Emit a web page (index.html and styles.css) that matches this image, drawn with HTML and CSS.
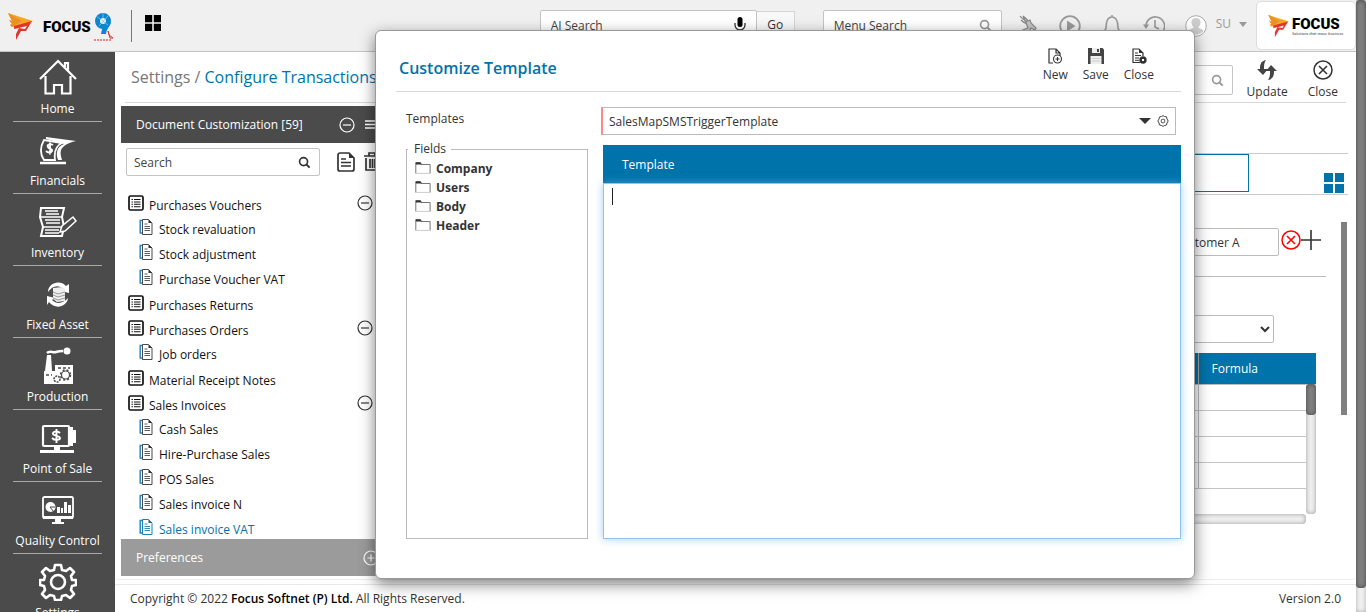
FILE: index.html
```html
<!DOCTYPE html>
<html lang="en">
<head>
<meta charset="utf-8">
<title>Focus 9 - Configure Transactions</title>
<link rel="stylesheet" href="styles.css">
</head>
<body>
<svg class="defs" aria-hidden="true">
  <symbol id="i-group" viewBox="0 0 16 16"><rect x="1" y="1" width="14" height="14" rx="1.5" fill="none" stroke="currentColor" stroke-width="1.7"/><path d="M3.5 4.5h1.4M3.5 7h1.4M3.5 9.300h1.400M3.500 11.700h1.400M6 4.500h6.500M6 7h6.500M6 9.300h6.500M6 11.700h6.500" stroke="currentColor" stroke-width="1.1"/></symbol>
  <symbol id="i-doc" viewBox="0 0 14 16"><path d="M3.500 1.500H1.200v12.500h2.300" fill="none" stroke="#2a86c8" stroke-width="1.500"/><path d="M3.500.5h6L13 4v11.500H3.500z" fill="#fff" stroke="currentColor" stroke-width=".9"/><path d="M9.500.5V4H13z" fill="currentColor"/><path d="M5.500 5h3M5.500 7.500h5.500M5.500 9.500h5.500M5.500 11.500h5.500" stroke="currentColor" stroke-width=".8"/></symbol>
  <symbol id="i-minus" viewBox="0 0 16 16"><circle cx="8" cy="8" r="7" fill="none" stroke="currentColor" stroke-width="1.200"/><path d="M4 8h8" stroke="currentColor" stroke-width="1.200"/></symbol>
  <symbol id="i-plus" viewBox="0 0 16 16"><circle cx="8" cy="8" r="7" fill="none" stroke="currentColor" stroke-width="1.200"/><path d="M4.500 8h7M8 4.500v7" stroke="currentColor" stroke-width="1.200"/></symbol>
  <symbol id="i-search" viewBox="0 0 14 14"><circle cx="6" cy="6" r="4.300" fill="none" stroke="currentColor" stroke-width="1.800"/><path d="M9 9l3.500 3.500" stroke="currentColor" stroke-width="2.200"/></symbol>
  <symbol id="i-grid" viewBox="0 0 20 20"><path d="M0 0h9v9H0zM11 0h9v9h-9zM0 11h9v9H0zM11 11h9v9h-9z" fill="currentColor"/></symbol>
  <symbol id="i-folder" viewBox="0 0 16 12"><path d="M.8 11V1h4.500l1 1.500h8.800v9" fill="none" stroke="#666" stroke-width=".9"/><path d="M0 11.400h15" stroke="#ccc"/><path d="M.5.3H5.500l1.500 2.200H1z" fill="#333"/></symbol>
  <symbol id="i-close" viewBox="0 0 20 20"><circle cx="10" cy="10" r="9" fill="none" stroke="currentColor" stroke-width="1.500"/><path d="M6 6l8 8M14 6l-8 8" stroke="currentColor" stroke-width="1.600"/></symbol>
  <symbol id="i-bird" viewBox="0 0 26 29"><path d="M0 1l25 8-8 3-13 3-2-2 2-1-3-4 3 1z" fill="#f7a823"/><path d="M0 1l14 8-10 6-2-2 2-1-3-4 3 1z" fill="#e9902a"/><path d="M6 14l18-5-6 10h-5l-5 9v-6l3-6-5 1z" fill="#e2352b"/><path d="M11 16l8-2-2 3z" fill="#fff"/></symbol>
</svg>

<div class="app">
  <div class="frame">
    <header class="topbar">
      <div class="brand">
        <svg class="bird"><use href="#i-bird"/></svg>
        <span class="brand-name">FOCUS</span>
        <svg class="nine" viewBox="0 0 20 30"><circle cx="9" cy="9" r="5.500" fill="none" stroke="#0c86cf" stroke-width="5"/><path d="M14.500 10c-1 4-5 6-5 12" fill="none" stroke="#0c86cf" stroke-width="5"/><path d="M2 4l12 9M15 3L5 14M9 1v5" stroke="#7cc8ee" stroke-width=".8"/><path d="M14 19l1 4 4 3h-3z" fill="none" stroke="#d33"/><path d="M0 28h18" stroke="#d66" stroke-width="1.500" stroke-dasharray="2 1"/></svg>
      </div>
      <span class="divider"></span>
      <button class="plain" aria-label="Apps"><svg class="apps"><use href="#i-grid"/></svg></button>
      <div class="top-right">
        <div class="field ai"><input type="text" placeholder="AI Search" aria-label="AI Search">
          <svg class="mic" viewBox="0 0 12 18"><rect x="3.500" y="0" width="5" height="10" rx="2.500" fill="#000"/><path d="M1 6v2a5 5 0 0 0 10 0V6M6 13v4M3 17h6" fill="none" stroke="#333" stroke-width="1.300"/></svg></div>
        <button class="go">Go</button>
        <div class="field menu"><input type="text" placeholder="Menu Search" aria-label="Menu Search"><svg class="mag"><use href="#i-search"/></svg></div>
        <div class="tools">
          <svg viewBox="0 0 22 22" fill="none" stroke="#888" stroke-width="1.200"><path d="M3 1c2 3 5 4 7 6M4 5c2 2 3 3 6 4M6 1c2 2 4 3 5 5l2-1 1 3 5 5-1 2-4-2-1 2 5 2c-4 1-6 0-8-1l-4 2-4 3 2-5 4-2 3-1z" fill="#c4c4c4"/></svg>
          <svg viewBox="0 0 22 22"><circle cx="11" cy="11" r="9.800" fill="none" stroke="#999" stroke-width="1.800"/><path d="M8 5.500l8.500 5.500L8 16.500z" fill="#999"/></svg>
          <svg viewBox="0 0 22 22"><path d="M11 0v2M5 13c0-7 2-11 6-11s6 4 6 11c0 2 3 3 3 4H2c0-1 3-2 3-4zM9 19h4" fill="none" stroke="#999" stroke-width="1.600"/></svg>
          <svg viewBox="0 0 22 22"><path d="M3 11a9.300 9.300 0 1 1 3 7M12 5v7l4 2" fill="none" stroke="#999" stroke-width="1.600"/><path d="M0 9.500h6L3 14z" fill="#999"/></svg>
          <svg viewBox="0 0 22 22"><circle cx="11" cy="11" r="10.300" fill="#fff" stroke="#aaa"/><path d="M11 3c3 0 5 2 4.500 5-.3 2-1 3-2 4 0 2 5 2 5 4a10 10 0 0 1-15 0c0-2 5-2 5-4-1-1-1.700-2-2-4C6 5 8 3 11 3z" fill="#ccc"/></svg>
        </div>
        <button class="plain user">SU<span class="caret"></span></button>
        <div class="card"><svg class="bird"><use href="#i-bird"/></svg><div class="card-text"><span class="brand-name">FOCUS</span><span class="tag">Solutions that move business</span></div></div>
      </div>
    </header>

    <div class="middle">
      <nav class="sidebar">
        <a href="#"><svg viewBox="0 0 38 38" fill="none" stroke="#fff" stroke-width="2.200"><path d="M1 20L19 2l18 18M26 8V4h3v8M6.500 17v17.500H15V26h8v8.500h8.500V17"/></svg><span>Home</span></a>
        <a href="#"><svg viewBox="0 0 38 38"><path d="M1 32h26" stroke="#fff" stroke-width="2.500"/><path d="M5 9C1 16 1 23 5 29h11c-1-8 0-14 7-17z" fill="none" stroke="#fff" stroke-width="1.800"/><path d="M7 6l30 4c-9 2-13 5-15 9-1 3 0 7 1 10h-4c-3-8 0-14 6-16L7 8z" fill="#fff"/><path d="M14 14c-4-2-6 0-5 2s5 2 4 4-4 2-6 0M11 11.500v12" fill="none" stroke="#fff" stroke-width="1.900"/></svg><span>Financials</span></a>
        <a href="#"><svg viewBox="0 0 38 38"><path d="M2 5h23l-2 9 2 10-2 9H2l2-9-3-10z" fill="none" stroke="#fff" stroke-width="2"/><path d="M1 14h22M3 24h21M6 8h13M7 11h13M6 17h15M7 20h14M6 27h14M6 30h14" stroke="#fff" stroke-width="1.500"/><path d="M21 29l2-6 11-9 3 4-11 10z" fill="#4b4b4b" stroke="#fff" stroke-width="1.500"/></svg><span>Inventory</span></a>
        <a href="#"><svg viewBox="0 0 38 38"><path d="M9 17c0-9 12-13 18-6l3-2v9l-8-2 3-2c-6-5-12-3-16 3zM29 23c-1 9-13 12-19 4l-2 3v-9l8 2-3 2c5 5 12 3 16-2z" fill="#fff"/><path d="M14 13l9-1 3 2v12l-8 1-4-3z" fill="#eee"/><path d="M14 17l5 2 7-2M14 20l5 2 7-2M14 23l5 2 7-2" fill="none" stroke="#777" stroke-width=".7"/></svg><span>Fixed Asset</span></a>
        <a href="#"><svg viewBox="0 0 38 38"><path d="M5 37V24h1L8 8h4l1 16h3v-6h18v19z" fill="#fff"/><path d="M8 6c3-3 6 0 9-1s4-1 7-1" fill="none" stroke="#fff" stroke-width="2.500"/><circle cx="28" cy="4" r="3.500" fill="#fff"/><g fill="none" stroke="#4b4b4b"><circle cx="26.500" cy="28" r="4" stroke-width="1.200"/><circle cx="26.500" cy="28" r="5" stroke-width="1.500" stroke-dasharray="2 2"/><circle cx="18" cy="32" r="3" stroke-width="1.500" stroke-dasharray="2 1"/><path d="M7 28h6M19 21h12" stroke-dasharray="3 2" stroke-width="1.300"/></g></svg><span>Production</span></a>
        <a href="#"><svg viewBox="0 0 38 38"><rect x="4" y="7" width="26" height="20" rx="1" fill="none" stroke="#fff" stroke-width="2.200"/><path d="M31 8h3v3h3v13h-3v3h-3zM15 28h6v3h14v3H1v-3h14z" fill="#fff"/><path d="M21 14c-3-3-8-1-7 1s7 2 7 4-5 3-8 0M17.500 10v14" fill="none" stroke="#fff" stroke-width="1.900"/></svg><span>Point of Sale</span></a>
        <a href="#"><svg viewBox="0 0 38 38"><rect x="4" y="6" width="30" height="21" rx="1.500" fill="none" stroke="#fff" stroke-width="1.800"/><path d="M4 25h30v3H4zM16 28h6v3h3v2H13v-2h3z" fill="#fff"/><circle cx="11.500" cy="16" r="5" fill="#fff"/><path d="M11 16h5M11 16l4 5" stroke="#4b4b4b"/><path d="M18 22v-6h3v6zM22 22v-5h2v5zM25 22V11h3v11zM29 22v-8h3v8z" fill="#fff"/></svg><span>Quality Control</span></a>
        <a href="#"><svg viewBox="0 0 38 38" fill="none" stroke="#fff" stroke-width="2.600"><circle cx="19" cy="19" r="7"/><path d="M16 2h6l1 5 4 1 4-3 4 4-3 4 1 4 4 0v5l-4 1-1 4 3 4-4 4-4-3-4 1-1 4h-6l-1-4-4-1-4 3-4-4 3-4-1-4-4-1v-5l4 0 1-4-3-4 4-4 4 3 4-1z" stroke-linejoin="round"/></svg><span>Settings</span></a>
      </nav>

      <div class="content">
        <main class="page">
          <div class="title-row">
            <h1><span>Settings /</span> <b>Configure Transactions</b></h1>
            <div class="title-tools">
              <div class="field page-search"><input type="text" aria-label="Search page"><svg class="mag"><use href="#i-search"/></svg></div>
              <button class="tool"><svg viewBox="0 0 20 20"><path d="M9 0C4 1 3 4 3 9H0l6 6 5-6H7c0-4 0-6 2-9zM11 20c5-1 6-4 6-9h3l-6-6-5 6h4c0 4 0 6-2 9z" fill="#444"/></svg>Update</button>
              <button class="tool"><svg><use href="#i-close"/></svg>Close</button>
            </div>
          </div>

          <div class="columns">
            <section class="docs">
              <div class="docs-head"><span>Document Customization [59]</span><span class="head-icons"><svg class="circ"><use href="#i-minus"/></svg><svg class="bars" viewBox="0 0 14 12"><path d="M0 2h14M0 5.500h14M0 9h14" stroke="#fff" stroke-width="1.600"/></svg></span></div>
              <div class="docs-search">
                <div class="field"><input type="text" placeholder="Search" aria-label="Search documents"><svg class="mag dark"><use href="#i-search"/></svg></div>
                <svg class="act" viewBox="0 0 18 20"><path d="M3 1h9l5 5v11a2 2 0 0 1-2 2H3a2 2 0 0 1-2-2V3a2 2 0 0 1 2-2z" fill="none" stroke="#333" stroke-width="1.700"/><path d="M12 1l5 5h-5z" fill="#333"/><path d="M4 7h5M4 10.500h10M4 14h10" stroke="#333" stroke-width="1.500"/></svg>
                <svg class="act" viewBox="0 0 18 20"><path d="M1 4h16M6 4V1h6v3M3 6v12h12V6M7 7v9M9.500 7v9M12 7v9" fill="none" stroke="#333" stroke-width="1.700"/></svg>
              </div>
              <ul class="tree">
                <li><div class="group"><svg><use href="#i-group"/></svg><span>Purchases Vouchers</span><svg class="fold"><use href="#i-minus"/></svg></div>
                  <ul><li><svg><use href="#i-doc"/></svg><span>Stock revaluation</span></li><li><svg><use href="#i-doc"/></svg><span>Stock adjustment</span></li><li><svg><use href="#i-doc"/></svg><span>Purchase Voucher VAT</span></li></ul></li>
                <li><div class="group"><svg><use href="#i-group"/></svg><span>Purchases Returns</span></div></li>
                <li><div class="group"><svg><use href="#i-group"/></svg><span>Purchases Orders</span><svg class="fold"><use href="#i-minus"/></svg></div>
                  <ul><li><svg><use href="#i-doc"/></svg><span>Job orders</span></li></ul></li>
                <li><div class="group"><svg><use href="#i-group"/></svg><span>Material Receipt Notes</span></div></li>
                <li><div class="group"><svg><use href="#i-group"/></svg><span>Sales Invoices</span><svg class="fold"><use href="#i-minus"/></svg></div>
                  <ul><li><svg><use href="#i-doc"/></svg><span>Cash Sales</span></li><li><svg><use href="#i-doc"/></svg><span>Hire-Purchase Sales</span></li><li><svg><use href="#i-doc"/></svg><span>POS Sales</span></li><li><svg><use href="#i-doc"/></svg><span>Sales invoice N</span></li><li class="active"><svg><use href="#i-doc"/></svg><span>Sales invoice VAT</span></li></ul></li>
              </ul>
              <div class="prefs"><span>Preferences</span><svg class="circ"><use href="#i-plus"/></svg></div>
            </section>

            <section class="detail">
              <div class="tabs"><span class="tab"></span><svg class="tiles"><use href="#i-grid"/></svg></div>
              <div class="detail-body">
                <div class="detail-main">
                  <div class="customer"><input type="text" class="box" value="Customer A" aria-label="Customer"><svg class="clear"><use href="#i-close"/></svg><svg class="add" viewBox="0 0 20 20"><path d="M0 10h20M10 0v20" stroke="#333" stroke-width="1.600"/></svg></div>
                  <select class="box pick" aria-label="Type"><option></option></select>
                  <div class="grid-wrap">
                    <table><thead><tr><th></th><th>Formula</th></tr></thead>
                      <tbody><tr><td></td><td></td></tr><tr><td></td><td></td></tr><tr><td></td><td></td></tr><tr><td></td><td></td></tr><tr><td></td><td></td></tr></tbody></table>
                    <div class="vbar"><span></span></div>
                    <div class="hbar"></div>
                  </div>
                </div>
                <div class="side-bar"></div>
              </div>
            </section>
          </div>
        </main>
        <footer><span><b>Copyright © 2022 <strong>Focus Softnet (P) Ltd.</strong></b> All Rights Reserved.</span><span><b>Version</b> 2.0</span></footer>
      </div>
    </div>
  </div>
  <div class="page-bar"><span></span></div>
</div>

<div class="modal" role="dialog" aria-labelledby="dlg-title">
  <div class="modal-head">
    <h2 id="dlg-title">Customize Template</h2>
    <div class="modal-tools">
      <button class="tool"><svg viewBox="0 0 16 16"><path d="M6 15H2V1h7l4 4v3M9 1v4h4" fill="none" stroke="#333" stroke-width="1.200"/><circle cx="10.500" cy="11" r="4" fill="#fff" stroke="#333" stroke-width="1.100"/><path d="M8.500 11h4M10.500 9v4" stroke="#333" stroke-width="1.100"/></svg>New</button>
      <button class="tool"><svg viewBox="0 0 16 16"><path d="M0 0h14.500L16 1.500V16H0z" fill="#444"/><path d="M4 0h8v5H4zM2.500 8h11v8h-11z" fill="#eee"/><path d="M9 1h2v3H9z" fill="#444"/><path d="M4 10.500h8M4 13h8" stroke="#ccc"/></svg>Save</button>
      <button class="tool"><svg viewBox="0 0 16 16"><path d="M9 14.500H2V1h6l4 4v3" fill="none" stroke="#333" stroke-width="1.200"/><path d="M8 1v4h4z" fill="#333"/><path d="M4 5h3M4 7.500h6M4 10h4M4 12.300h4" stroke="#333"/><circle cx="12" cy="12" r="3.700" fill="#333"/><path d="M11 11l2 2M13 11l-2 2" stroke="#fff"/></svg>Close</button>
    </div>
  </div>
  <div class="modal-body">
    <div class="modal-left">
      <label for="tpl">Templates</label>
      <fieldset><legend>Fields</legend>
        <ul><li><svg><use href="#i-folder"/></svg>Company</li><li><svg><use href="#i-folder"/></svg>Users</li><li><svg><use href="#i-folder"/></svg>Body</li><li><svg><use href="#i-folder"/></svg>Header</li></ul>
      </fieldset>
    </div>
    <div class="modal-right">
      <div class="combo"><input id="tpl" type="text" value="SalesMapSMSTriggerTemplate"><span class="caret"></span>
        <svg viewBox="0 0 12 12" fill="none" stroke="#444"><path d="M4.500 1.500L6 .6l1.500.9 2 .3.500 2.200 1.200 2-1.200 2-.5 2-2 .5-1.500.9-1.500-.9-2-.5-.5-2L.8 6 2 4l.5-2z"/><rect x="4.300" y="4.300" width="3.400" height="3.400" rx="1"/></svg></div>
      <div class="editor">
        <label for="body">Template</label>
        <textarea id="body"></textarea>
        <span class="cursor"></span>
      </div>
    </div>
  </div>
</div>
</body>
</html>
```
FILE: styles.css
```css
* { box-sizing: border-box; }
body { margin: 0; font-family: "Open Sans", "Noto Sans", sans-serif; font-size: 12px; line-height: 16px; color: #333; background: #fff; overflow: hidden; }
svg { display: block; flex: none; }
ul { list-style: none; margin: 0; padding: 0; }
button, input, textarea, select { font: inherit; color: inherit; }
a { color: inherit; text-decoration: none; }
.defs { position: absolute; width: 0; height: 0; }
.plain { background: none; border: 0; padding: 0; }

.app { display: flex; height: 100vh; }
.frame { flex: 1; min-width: 0; display: flex; flex-direction: column; }
.page-bar { width: 10px; background: #f0f0f0; box-shadow: inset 0 0 4px #aaa; }
.page-bar span { display: block; height: 96%; background: #838383; border-radius: 4px; box-shadow: inset 0 0 5px #444; }

/* top bar */
.topbar { display: flex; align-items: center; height: 52px; flex: none; background: #f0f0f0; border-bottom: 1px solid #c4c4c4; padding-left: 8px; }
.brand { display: flex; align-items: center; width: 123px; padding-top: 2px; }
.bird { width: 26px; height: 29px; }
.brand-name { font-family: Roboto, sans-serif; font-weight: 900; font-size: 15px; color: #000; }
.brand .brand-name { margin-left: 9px; }
.nine { width: 20px; height: 30px; margin-left: 3px; }
.divider { width: 1px; height: 32px; background: #777; }
.apps { width: 16px; height: 16px; color: #000; margin: 0 0 6px 13px; }
.top-right { margin-left: auto; display: flex; align-items: center; }
.field { display: flex; align-items: center; background: #fff; border: 1px solid #c4c4c4; border-radius: 2px; height: 28px; flex: none; }
.field input { flex: 1; min-width: 0; border: 0; background: none; padding: 2px 0 0 7px; outline: 0; }
.field input::placeholder { color: #444; opacity: 1; }
.top-right .field { height: 31px; }
.top-right .field input { padding: 0 0 0 10px; }
.ai { width: 217px; padding-right: 10px; }
.mic { width: 12px; height: 18px; }
.go { width: 38px; height: 30px; border: 1px solid #d4d4d4; border-left: 0; background: #f8f8f8; padding: 0 0 2px; }
.menu { width: 179px; margin: 0 15px 0 28px; padding-right: 9px; }
.mag { width: 13px; height: 13px; color: #999; }
.mag.dark { color: #333; }
.tools { display: flex; gap: 20px; }
.tools svg { width: 22px; height: 22px; }
.user { display: flex; align-items: center; gap: 8px; margin: 0 9px; padding-bottom: 3px; color: #999; }
.caret { border: 4px solid transparent; border-top: 5px solid #999; border-bottom: 0; }
.card { display: flex; align-items: center; width: 100px; height: 49px; background: #fff; border: 1px solid #ddd; border-radius: 5px; padding-left: 11px; }
.card .bird { width: 22px; height: 24px; }
.card-text { display: flex; flex-direction: column; margin-left: 2px; }
.tag { font-size: 4px; line-height: 4px; font-style: italic; }

/* sidebar */
.middle { flex: 1; min-height: 0; display: flex; }
.sidebar { width: 115px; flex: none; background: #4b4b4b; color: #fff; padding: 0 13px; overflow: hidden; }
.sidebar a { display: flex; flex-direction: column; align-items: center; height: 72px; padding-top: 9px; gap: 4px; border-bottom: 1px solid #aaa; white-space: nowrap; }
.sidebar a:first-child { height: 70px; padding-top: 7px; }
.sidebar svg { width: 38px; height: 38px; }

/* page */
.content { flex: 1; min-width: 0; display: flex; flex-direction: column; }
.page { flex: 1; min-height: 0; display: flex; flex-direction: column; border-bottom: 1px solid #eee; border-radius: 4px; padding-bottom: 3px; }
.title-row { display: flex; justify-content: space-between; align-items: center; height: 51px; margin: 0 10px; padding: 0 8px 0 6px; border-bottom: 1px solid #d8d8d8; }
h1 { margin: 0; font-size: 16px; font-weight: 400; color: #777; }
h1 b { font-weight: 500; color: #0073aa; }
.title-tools { display: flex; align-items: center; }
.page-search { width: 200px; height: 30px; margin: 6px 14px 0 0; padding-right: 8px; }
.tool { display: flex; flex-direction: column; align-items: center; background: none; border: 0; padding: 0; }
.title-tools .tool { gap: 4px; margin-left: 20px; padding-top: 5px; }
.title-tools .page-search + .tool { margin-left: 0; }
.title-tools .tool svg { width: 20px; height: 20px; }
.columns { flex: 1; min-height: 0; display: flex; gap: 20px; padding: 3px 8px 0 6px; }

/* document list */
.docs { width: 270px; flex: none; display: flex; flex-direction: column; min-height: 0; }
.docs-head, .prefs { display: flex; justify-content: space-between; align-items: center; height: 37px; flex: none; padding: 0 12px 0 15px; color: #fff; background: #4b4b4b; }
.prefs { background: #9b9b9b; }
.head-icons { display: flex; align-items: center; gap: 10px; }
.circ { width: 16px; height: 16px; }
.bars { width: 14px; height: 12px; }
.docs-search { display: flex; align-items: center; padding: 5px 5px 0; margin-bottom: 18px; flex: none; }
.docs-search .field { width: 194px; padding-right: 8px; margin-right: 17px; }
.act { width: 18px; height: 20px; }
.act + .act { margin-left: 8px; }
.tree { flex: 1; min-height: 0; overflow: hidden; padding: 0 18px 0 7px; color: #111; }
.tree > li { padding-bottom: 2px; }
.group { display: flex; align-items: center; height: 23px; gap: 5px; }
.group svg { width: 16px; height: 16px; margin-bottom: 5px; }
.group .fold { margin-left: auto; color: #333; }
.tree ul { padding-left: 11px; }
.tree ul li { display: flex; align-items: center; height: 25px; gap: 6px; }
.tree ul svg { width: 14px; height: 16px; margin-bottom: 5px; color: #333; }
.tree .active, .tree ul .active svg { color: #0073aa; }

/* detail */
.detail { flex: 1; min-width: 0; }
.tabs { display: flex; align-items: flex-end; justify-content: space-between; height: 42px; margin-top: 47px; padding: 0 4px 1px 0; border-top: 1px solid #ccc; border-bottom: 1px solid #ccc; }
.tab { align-self: flex-start; width: 838px; height: 38px; border: 1px solid #0073aa; }
.tiles { width: 20px; height: 20px; color: #0073aa; }
.detail-body { display: flex; align-items: flex-start; gap: 15px; padding: 27px 1px 0 0; }
.detail-main { flex: 1; min-width: 0; display: flex; flex-direction: column; align-items: flex-end; }
.side-bar { width: 6px; height: 193px; background: #808080; }
.box { width: 100px; height: 28px; border: 1px solid #bbb; border-radius: 2px; background: #fff; padding: 0 7px; }
.customer { display: flex; align-self: stretch; justify-content: flex-end; padding: 6px 5px 20px 0; border-bottom: 1px solid #bbb; }
.customer .box { width: 110px; padding-left: 4px; }
.clear { width: 20px; height: 20px; color: #f00; margin: 2px 0 0 2px; }
.add { width: 20px; height: 20px; margin-top: 2px; }
.pick { margin: 38px 52px 10px 0; }
.grid-wrap { position: relative; width: 100%; padding: 0 10px 10px 0; }
table { width: 100%; border-collapse: collapse; }
th { height: 31px; background: #0073aa; color: #fff; text-align: left; font-weight: 400; padding: 1px 13px 0; border-right: 1px solid #aaa; border-bottom: 1px solid #bbb; }
th:last-child { width: 118px; border-right: 0; }
td { height: 26px; padding: 0; border-right: 1px solid #bbb; border-bottom: 1px solid #c4c4c4; }
td:last-child, tr:last-child td { border-right: 0; }
tr:last-child td { border-bottom: 0; }
.vbar { position: absolute; right: 10px; top: 31px; bottom: 10px; width: 10px; background: #eee; border-radius: 4px; box-shadow: inset 0 0 4px #999; }
.vbar span { display: block; height: 31px; background: #808080; border-radius: 4px; box-shadow: inset 0 0 4px #444; }
.hbar { position: absolute; left: 0; right: 20px; bottom: 0; height: 10px; background: #eee; border-radius: 4px; box-shadow: inset 0 0 4px #999; }

footer { display: flex; justify-content: space-between; align-items: center; height: 28px; flex: none; margin-top: 4px; padding: 0 15px; border-top: 1px solid #e8e8e8; }
footer b { font-weight: 500; }
footer strong { font-weight: 600; color: #000; }

/* dialog */
.modal { position: absolute; top: 30px; left: 375px; right: 171px; background: #fff; border: 1px solid #999; border-radius: 6px; box-shadow: 0 5px 15px rgba(0, 0, 0, .5); padding: 0 13px 39px 20px; }
.modal-head { display: flex; justify-content: space-between; align-items: center; height: 61px; padding: 13px 27px 0 3px; border-bottom: 1px solid #d8d8d8; }
h2 { margin: 0; font-size: 16px; font-weight: 600; color: #0073aa; }
.modal-tools { display: flex; gap: 15px; padding-bottom: 4px; }
.modal-tools .tool svg { width: 16px; height: 16px; margin-bottom: 3px; }
.modal-body { display: flex; gap: 13px; padding-top: 15px; }
.modal-left { width: 192px; flex: none; padding: 4px 0 0 10px; display: flex; flex-direction: column; }
fieldset { flex: 1; margin: 14px 0 0; padding: 2px 8px 0; border: 1px solid #bbb; }
legend { padding: 0 5px 0 6px; margin-left: -7px; }
fieldset li { display: flex; align-items: center; gap: 5px; height: 19px; font-weight: 700; }
fieldset svg { width: 16px; height: 12px; margin-bottom: 2px; }
.modal-right { flex: 1; min-width: 0; }
.combo { display: flex; align-items: center; height: 28px; margin-right: 5px; border: 1px solid #bbb; border-left: 2px solid #f88; padding-right: 6px; }
.combo input { flex: 1; min-width: 0; border: 0; outline: 0; padding: 2px 0 0 6px; }
.combo .caret { border-width: 6px 6px 0; border-top-color: #333; margin-right: 6px; }
.combo svg { width: 12px; height: 12px; }
.editor { position: relative; display: flex; flex-direction: column; margin: 10px 0 0 2px; }
.editor label { height: 38px; line-height: 40px; padding-left: 19px; background: #0073aa; color: #fff; font-weight: 500; }
.editor textarea { height: 356px; border: 1px solid #8fc4ec; outline: 0; resize: none; padding: 4px 8px; box-shadow: 0 0 8px rgba(102, 175, 233, .6); }
.cursor { position: absolute; left: 9px; top: 43px; width: 1px; height: 17px; background: #222; }
```
